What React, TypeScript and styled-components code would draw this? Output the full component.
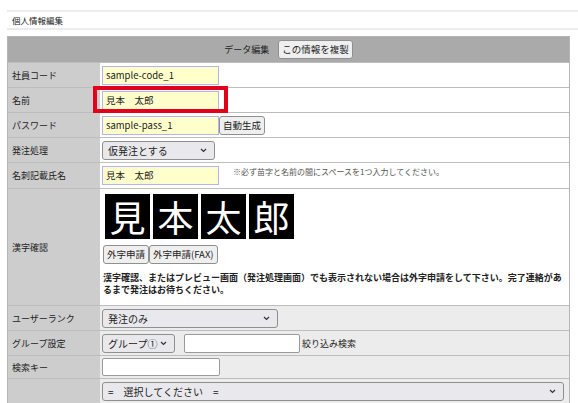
import React from 'react';
import styled, { createGlobalStyle } from 'styled-components';

const GlobalStyle = createGlobalStyle`
  body {
    margin: 0;
    background: #ffffff;
    font-family: "Noto Sans CJK JP", "Noto Sans", sans-serif;
    color: #222;
  }
`;

const Page = styled.div`
  padding-left: 7px;
  width: 571px;
  overflow: hidden;
`;

const TitleBar = styled.div`
  margin-top: 10px;
  border-top: 2px solid #ececec;
  border-bottom: 2px solid #ececec;
  height: 16px;
  padding-left: 5px;
  font-size: 8.5px;
  line-height: 16px;
`;

const Sheet = styled.div`
  margin-top: 6px;
  width: 561px;
  border: 1px solid #b5b5b5;
  border-bottom: none;
`;

const HeaderRow = styled.div`
  height: 25px;
  background: #aaaaaa;
  display: flex;
  align-items: center;
  justify-content: center;
  gap: 9px;
  font-size: 9px;
`;

const Row = styled.div<{ $height?: number }>`
  display: flex;
  border-top: 1px solid #bdbdbd;
  height: ${p => p.$height ?? 24}px;
`;

const Label = styled.div`
  width: 88px;
  flex: none;
  background: #cdcdcd;
  padding-left: 4px;
  display: flex;
  align-items: center;
  font-size: 9px;
`;

const Value = styled.div<{ $shade?: boolean; $column?: boolean }>`
  flex: 1;
  background: ${p => (p.$shade ? '#ececec' : '#ffffff')};
  padding: 0 2px;
  display: flex;
  flex-direction: ${p => (p.$column ? 'column' : 'row')};
  align-items: ${p => (p.$column ? 'flex-start' : 'center')};
  position: relative;
`;

const TextBox = styled.div<{ $width?: number; $plain?: boolean; $height?: number }>`
  box-sizing: border-box;
  width: ${p => p.$width ?? 117}px;
  height: ${p => p.$height ?? 19}px;
  border: 1px solid ${p => (p.$plain ? '#9a9a9a' : '#b4b4ee')};
  background: ${p => (p.$plain ? '#ffffff' : '#ffffcc')};
  border-radius: ${p => (p.$plain ? '2px' : '0')};
  font-size: 9.5px;
  line-height: 17px;
  padding-left: 3px;
  white-space: pre;
`;

const Button = styled.button`
  box-sizing: border-box;
  height: 19px;
  padding: 0 3px;
  border: 1px solid #8f8f8f;
  border-radius: 3px;
  background: #efefef;
  font-family: inherit;
  font-size: 9.5px;
  line-height: 17px;
  color: #222;
  cursor: pointer;
`;

const Select = styled.div<{ $width: number }>`
  box-sizing: border-box;
  width: ${p => p.$width}px;
  height: 19px;
  border: 1px solid #8f8f8f;
  border-radius: 3px;
  background: #e9e9ed;
  display: flex;
  align-items: center;
  justify-content: space-between;
  padding: 0 7px 0 5px;
  font-size: 10px;
  color: #222;
`;

const Chevron = () => (
  <svg width="7" height="5" viewBox="0 0 7 5">
    <path d="M1 1 L3.5 3.5 L6 1" fill="none" stroke="#333" strokeWidth="1.2" />
  </svg>
);

const Note = styled.span`
  margin-left: 14px;
  margin-top: -8px;
  font-size: 8px;
  color: #555;
`;

const Highlight = styled.div`
  position: absolute;
  left: -7px;
  top: -2px;
  width: 135px;
  height: 27px;
  box-sizing: border-box;
  border: 4px solid #e3001b;
`;

const KanjiRow = styled.div`
  display: flex;
  gap: 3px;
  margin: 5px 0 0 3px;
`;

const KanjiBox = styled.div`
  width: 45px;
  height: 45px;
  background: #000;
  color: #fff;
  font-size: 36px;
  font-weight: 400;
  line-height: 45px;
  text-align: center;
`;

const ButtonGroup = styled.div`
  display: flex;
  margin-top: 6px;
  margin-left: 1px;
`;

const Warning = styled.p`
  width: 462px;
  margin: 8px 0 0 1px;
  font-size: 9px;
  font-weight: 700;
  line-height: 12px;
`;

const Inline = styled.div<{ $gap?: number }>`
  display: flex;
  align-items: center;
  gap: ${p => p.$gap ?? 9}px;
  font-size: 9px;
`;

const kanji = ['見', '本', '太', '郎'];

export default function App() {
  return (
    <>
      <GlobalStyle />
      <Page>
        <TitleBar>個人情報編集</TitleBar>
        <Sheet>
          <HeaderRow>
            <span>データ編集</span>
            <Button>この情報を複製</Button>
          </HeaderRow>
          <Row>
            <Label>社員コード</Label>
            <Value><TextBox>sample-code_1</TextBox></Value>
          </Row>
          <Row>
            <Label>名前</Label>
            <Value>
              <TextBox>見本　太郎</TextBox>
              <Highlight />
            </Value>
          </Row>
          <Row>
            <Label>パスワード</Label>
            <Value>
              <TextBox>sample-pass_1</TextBox>
              <Button>自動生成</Button>
            </Value>
          </Row>
          <Row>
            <Label>発注処理</Label>
            <Value>
              <Select $width={113}>仮発注とする<Chevron /></Select>
            </Value>
          </Row>
          <Row $height={25}>
            <Label>名刺記載氏名</Label>
            <Value>
              <TextBox>見本　太郎</TextBox>
              <Note>※必ず苗字と名前の間にスペースを1つ入力してください。</Note>
            </Value>
          </Row>
          <Row $height={116}>
            <Label>漢字確認</Label>
            <Value $column>
              <KanjiRow>
                {kanji.map(k => <KanjiBox key={k}>{k}</KanjiBox>)}
              </KanjiRow>
              <ButtonGroup>
                <Button>外字申請</Button>
                <Button>外字申請(FAX)</Button>
              </ButtonGroup>
              <Warning>
                漢字確認、またはプレビュー画面（発注処理画面）でも表示されない場合は外字申請をして下さい。完了連絡があるまで発注はお待ちください。
              </Warning>
            </Value>
          </Row>
          <Row>
            <Label>ユーザーランク</Label>
            <Value $shade>
              <Select $width={176}>発注のみ<Chevron /></Select>
            </Value>
          </Row>
          <Row>
            <Label>グループ設定</Label>
            <Value $shade>
              <Inline>
                <Select $width={73}>グループ①<Chevron /></Select>
                <Inline $gap={2}>
                  <TextBox $plain $width={116}></TextBox>
                  <span>絞り込み検索</span>
                </Inline>
              </Inline>
            </Value>
          </Row>
          <Row $height={22}>
            <Label>検索キー</Label>
            <Value $shade>
              <TextBox $plain $width={118} $height={18}></TextBox>
            </Value>
          </Row>
          <Row>
            <Label></Label>
            <Value $shade>
              <Select $width={462}>{'=　選択してください　='}<Chevron /></Select>
            </Value>
          </Row>
        </Sheet>
      </Page>
    </>
  );
}
